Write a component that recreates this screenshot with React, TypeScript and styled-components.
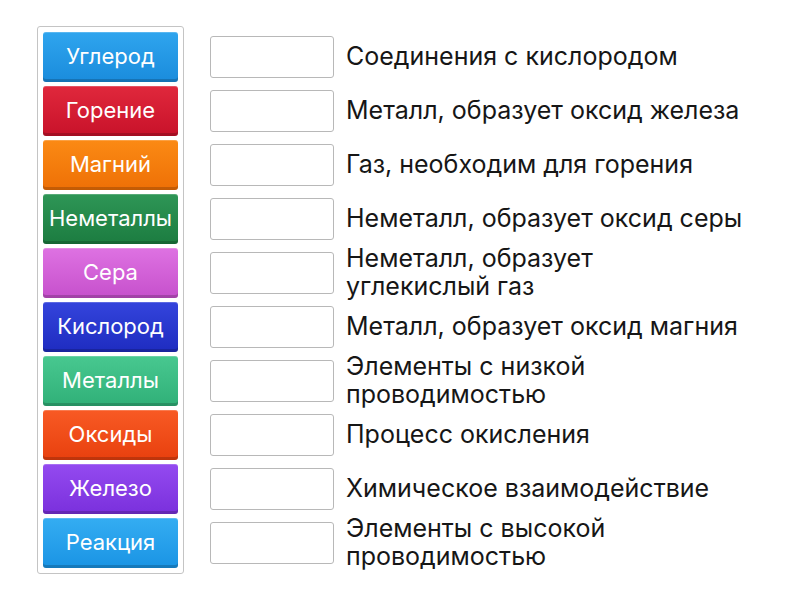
import React from "react";
import styled, { createGlobalStyle } from "styled-components";

const GlobalStyle = createGlobalStyle`
	body {
		margin: 0;
		background: #ffffff;
		font-family: Inter, "Liberation Sans", sans-serif;
	}
`;

const Page = styled.div`
	display: flex;
	align-items: flex-start;
	gap: 26px;
	padding: 26px 0 0 37px;
	width: 800px;
	height: 600px;
	box-sizing: border-box;
`;

const Panel = styled.div`
	display: flex;
	flex-direction: column;
	gap: 4px;
	width: 147px;
	padding: 5px;
	box-sizing: border-box;
	border: 1px solid #c4c4c4;
	border-radius: 3px;
	background: #fff;
`;

const Tile = styled.div<{ $color: string; $dark: string }>`
	height: 50px;
	display: flex;
	align-items: center;
	justify-content: center;
	border-radius: 3px;
	box-sizing: border-box;
	padding-bottom: 3px;
	color: #fff;
	font-size: 22px;
	white-space: nowrap;
	background: linear-gradient(to bottom, ${p => p.$color}, ${p => p.$dark});
	box-shadow: inset 0 -3px 0 rgba(0, 0, 0, 0.18), inset 0 1px 0 rgba(255, 255, 255, 0.2);
`;

const Rows = styled.div`
	display: flex;
	flex-direction: column;
	gap: 4px;
	padding-top: 6px;
`;

const Row = styled.div`
	height: 50px;
	display: flex;
	align-items: center;
	gap: 12px;
`;

const Slot = styled.div`
	width: 124px;
	height: 42px;
	flex-shrink: 0;
	box-sizing: border-box;
	border: 1px solid #b8b8b8;
	border-radius: 3px;
	background: #fff;
`;

const Label = styled.div`
	font-size: 25px;
	line-height: 28px;
	color: #161616;
	width: 440px;
	padding-bottom: 3px;
	white-space: nowrap;
`;

const tiles = [
	{ text: "Углерод", color: "#2fa5ee", dark: "#1a8cdc" },
	{ text: "Горение", color: "#e0283c", dark: "#c8122a" },
	{ text: "Магний", color: "#fb8a14", dark: "#ee7006" },
	{ text: "Неметаллы", color: "#2e9656", dark: "#1c7c40" },
	{ text: "Сера", color: "#de72e2", dark: "#c650cc" },
	{ text: "Кислород", color: "#3444dc", dark: "#1e2cc0" },
	{ text: "Металлы", color: "#48c890", dark: "#30b078" },
	{ text: "Оксиды", color: "#f85a24", dark: "#e8400e" },
	{ text: "Железо", color: "#944af0", dark: "#7a30dc" },
	{ text: "Реакция", color: "#34adf2", dark: "#1a94e4" },
];

const labels = [
	"Соединения с кислородом",
	"Металл, образует оксид железа",
	"Газ, необходим для горения",
	"Неметалл, образует оксид серы",
	"Неметалл, образует\nуглекислый газ",
	"Металл, образует оксид магния",
	"Элементы с низкой\nпроводимостью",
	"Процесс окисления",
	"Химическое взаимодействие",
	"Элементы с высокой\nпроводимостью",
];

export default function App() {
	return (
		<>
			<GlobalStyle />
			<Page>
				<Panel>
					{tiles.map(t => (
						<Tile key={t.text} $color={t.color} $dark={t.dark}>
							{t.text}
						</Tile>
					))}
				</Panel>
				<Rows>
					{labels.map(l => (
						<Row key={l}>
							<Slot />
							<Label>
								{l.split("\n").map(line => (
									<div key={line}>{line}</div>
								))}
							</Label>
						</Row>
					))}
				</Rows>
			</Page>
		</>
	);
}
